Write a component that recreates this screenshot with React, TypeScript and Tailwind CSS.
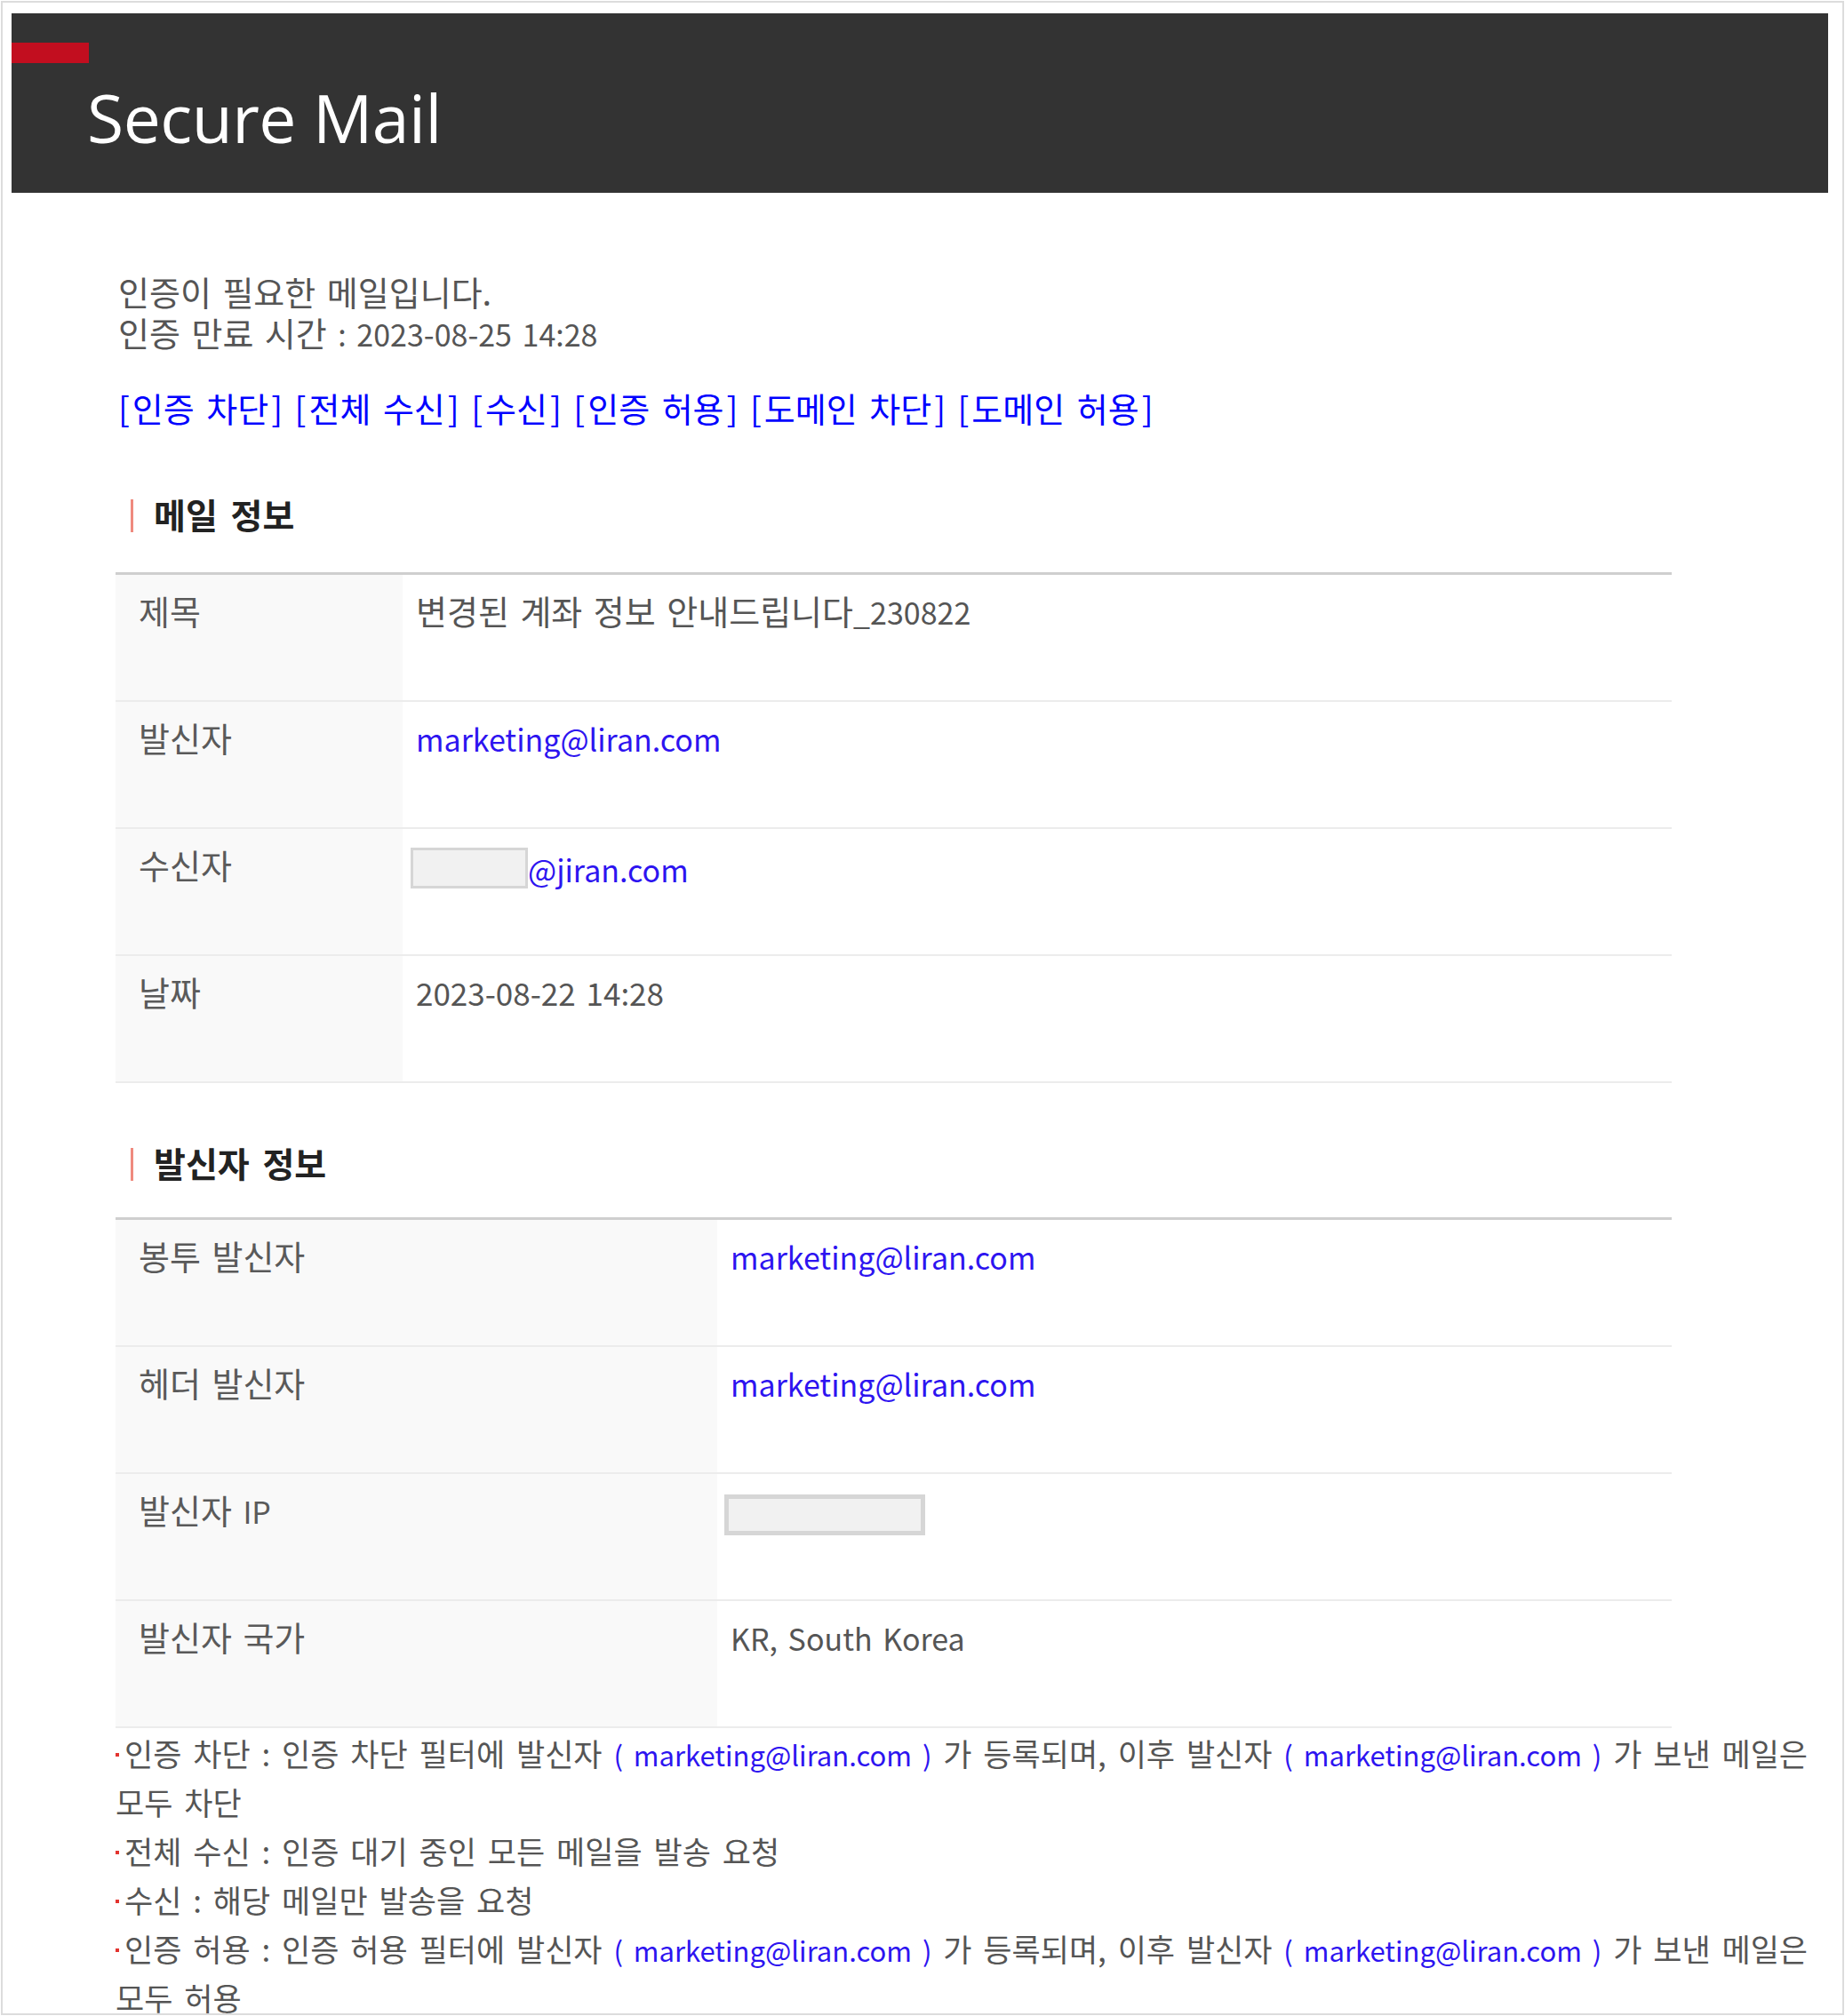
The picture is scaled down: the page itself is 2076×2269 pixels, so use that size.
import React from "react";

const EMAIL = "marketing@liran.com";

function L({ children }: { children: React.ReactNode }) {
  return <span className="text-[34px] leading-none">{children}</span>;
}

function FL({ children }: { children: React.ReactNode }) {
  return <span className="text-[31px] leading-none">{children}</span>;
}

function Mask({ w, b }: { w: string; b: string }) {
  return <span className={`inline-block h-[46px] bg-[#f1f1f1] border-[#d6d6d6] ${w} ${b}`} />;
}

function Row({ label, children, labelW }: { label: React.ReactNode; children: React.ReactNode; labelW: string }) {
  return (
    <div className="flex h-[143px] border-b-2 border-[#ececec]">
      <div className={`${labelW} shrink-0 bg-[#f9f9f9] pl-[26px] pt-[17px] text-[#5a5a5a]`}>{label}</div>
      <div className="flex-1 pl-[15px] pt-[17px] text-[#555]">{children}</div>
    </div>
  );
}

function Link({ children }: { children: React.ReactNode }) {
  return <span className="text-[#2d14f0]">{children}</span>;
}

function Bullet() {
  return <span className="inline-block w-[4px] h-[4px] bg-[#e3342f] mr-[6px] align-[11px]" />;
}

function Action({ t }: { t: string }) {
  return (
    <span>
      <span className="mr-[3px]">[</span>
      {t}
      <span className="ml-[3px]">]</span>
    </span>
  );
}

function FootEmail() {
  return (
    <Link>
      <FL>( {EMAIL} )</FL>
    </Link>
  );
}

export default function App() {
  return (
    <div className="w-full h-[2269px] bg-white p-px font-['Noto_Sans_CJK_KR',sans-serif] [word-spacing:4px]">
      <div className="h-full border-2 border-[#dcdcdc] overflow-hidden">
        <header className="ml-[10px] mr-[16px] mt-[12px] h-[202px] bg-[#333333] pt-[33px] [word-spacing:0px]">
          <div className="w-[87px] h-[23px] bg-[#c20e1f]" />
          <div className="mt-[24px] pl-[85px] font-['Open_Sans',sans-serif] text-[75px] leading-none tracking-[-0.5px] text-white">
            Secure Mail
          </div>
        </header>

        <main className="pl-[127px]">
          <div className="mt-[88px] pl-[3px] text-[38px] leading-[46px] text-[#555]">
            <p>인증이 필요한 메일입니다.</p>
            <p>
              인증 만료 시간 <L>: 2023-08-25 14:28</L>
            </p>
          </div>

          <div className="mt-[39px] pl-[3px] text-[38px] leading-[46px] text-[#0000ff] [word-spacing:5px]">
            <Action t="인증 차단" /> <Action t="전체 수신" /> <Action t="수신" /> <Action t="인증 허용" />{" "}
            <Action t="도메인 차단" /> <Action t="도메인 허용" />
          </div>

          <h2 className="mt-[73px] flex items-center text-[39px] leading-[46px] font-bold text-[#222] [word-spacing:6px]">
            <span className="inline-block w-[3px] h-[37px] bg-[#ef8a7e] ml-[17px] mr-[23px] mt-[4px]" />
            메일 정보
          </h2>

          <div className="mt-[43px] w-[1751px] border-t-[3px] border-[#cfcfcf] text-[38px] leading-[46px]">
            <Row label="제목" labelW="w-[323px]">
              변경된 계좌 정보 안내드립니다<L>_230822</L>
            </Row>
            <Row label="발신자" labelW="w-[323px]">
              <Link>
                <L>{EMAIL}</L>
              </Link>
            </Row>
            <Row label="수신자" labelW="w-[323px]">
              <div className="flex items-center h-[46px] mt-[4px] -ml-[6px]">
                <Mask w="w-[132px]" b="border-[3px]" />
                <Link>
                  <L>@jiran.com</L>
                </Link>
              </div>
            </Row>
            <Row label="날짜" labelW="w-[323px]">
              <span className="text-[35px] leading-none">2023-08-22 14:28</span>
            </Row>
          </div>

          <h2 className="mt-[66px] flex items-center text-[39px] leading-[46px] font-bold text-[#222] [word-spacing:6px]">
            <span className="inline-block w-[3px] h-[37px] bg-[#ef8a7e] ml-[17px] mr-[23px] mt-[4px]" />
            발신자 정보
          </h2>

          <div className="mt-[39px] w-[1751px] border-t-[3px] border-[#cfcfcf] text-[38px] leading-[46px]">
            <Row label="봉투 발신자" labelW="w-[677px]">
              <Link>
                <L>{EMAIL}</L>
              </Link>
            </Row>
            <Row label="헤더 발신자" labelW="w-[677px]">
              <Link>
                <L>{EMAIL}</L>
              </Link>
            </Row>
            <Row
              label={
                <>
                  발신자 <L>IP</L>
                </>
              }
              labelW="w-[677px]"
            >
              <div className="flex items-center h-[46px] mt-[6px] -ml-[7px]">
                <Mask w="w-[226px]" b="border-[5px]" />
              </div>
            </Row>
            <Row label="발신자 국가" labelW="w-[677px]">
              <L>KR, South Korea</L>
            </Row>
          </div>

          <div className="w-[1927px] text-[35px] leading-[55px] text-[#555] [word-spacing:5px]">
            <p>
              <Bullet />인증 차단 : 인증 차단 필터에 발신자 <FootEmail /> 가 등록되며, 이후 발신자 <FootEmail /> 가 보낸 메일은
              모두 차단
            </p>
            <p>
              <Bullet />전체 수신 : 인증 대기 중인 모든 메일을 발송 요청
            </p>
            <p>
              <Bullet />수신 : 해당 메일만 발송을 요청
            </p>
            <p>
              <Bullet />인증 허용 : 인증 허용 필터에 발신자 <FootEmail /> 가 등록되며, 이후 발신자 <FootEmail /> 가 보낸 메일은
              모두 허용
            </p>
            <p>
              <Bullet />도메인 차단 : 도메인 차단 필터에 발신자 도메인 <FL>( liran.com )</FL> 이 등록되며, 이후 해당 도메인에서 보낸
              메일은 모두 차단
            </p>
          </div>
        </main>
      </div>
    </div>
  );
}
